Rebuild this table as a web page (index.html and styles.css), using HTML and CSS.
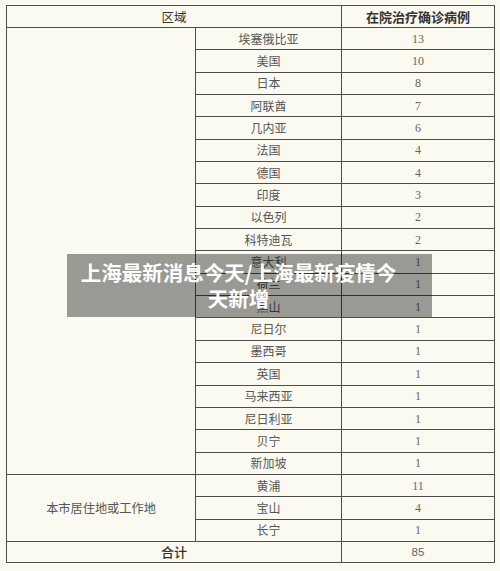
FILE: index.html
```html
<!DOCTYPE html>
<html lang="zh">
<head>
<meta charset="utf-8">
<link rel="stylesheet" href="styles.css">
</head>
<body>
<div class="page">
  <table class="cases">
    <colgroup>
      <col class="c1"><col class="c2"><col class="c3">
    </colgroup>
    <thead>
      <tr class="head">
        <th colspan="2" class="h-region">区域</th>
        <th class="h-count">在院治疗确诊病例</th>
      </tr>
    </thead>
    <tbody>
      <tr><td rowspan="20" class="group"></td><td class="name">埃塞俄比亚</td><td class="num">13</td></tr>
      <tr><td class="name">美国</td><td class="num">10</td></tr>
      <tr><td class="name">日本</td><td class="num">8</td></tr>
      <tr><td class="name">阿联酋</td><td class="num">7</td></tr>
      <tr><td class="name">几内亚</td><td class="num">6</td></tr>
      <tr><td class="name">法国</td><td class="num">4</td></tr>
      <tr><td class="name">德国</td><td class="num">4</td></tr>
      <tr><td class="name">印度</td><td class="num">3</td></tr>
      <tr><td class="name">以色列</td><td class="num">2</td></tr>
      <tr><td class="name">科特迪瓦</td><td class="num">2</td></tr>
      <tr><td class="name">意大利</td><td class="num">1</td></tr>
      <tr><td class="name">荷兰</td><td class="num">1</td></tr>
      <tr><td class="name">黑山</td><td class="num">1</td></tr>
      <tr><td class="name">尼日尔</td><td class="num">1</td></tr>
      <tr><td class="name">墨西哥</td><td class="num">1</td></tr>
      <tr><td class="name">英国</td><td class="num">1</td></tr>
      <tr><td class="name">马来西亚</td><td class="num">1</td></tr>
      <tr><td class="name">尼日利亚</td><td class="num">1</td></tr>
      <tr><td class="name">贝宁</td><td class="num">1</td></tr>
      <tr><td class="name">新加坡</td><td class="num">1</td></tr>
      <tr><td rowspan="3" class="group">本市居住地或工作地</td><td class="name">黄浦</td><td class="num">11</td></tr>
      <tr><td class="name">宝山</td><td class="num">4</td></tr>
      <tr><td class="name">长宁</td><td class="num">1</td></tr>
      <tr class="total"><td colspan="2" class="t-label">合计</td><td class="num">85</td></tr>
    </tbody>
  </table>
  <div class="banner">上海最新消息今天/上海最新疫情今<br>天新增</div>
</div>
</body>
</html>
```
FILE: styles.css
```css
html, body {
  margin: 0;
  padding: 0;
  background: #fbfaf0;
}
body {
  font-family: "Noto Sans CJK SC", "Noto Sans", sans-serif;
  color: #555;
}
.page {
  position: relative;
  width: 500px;
  height: 571px;
  padding: 5px 0 0 6px;
  box-sizing: border-box;
}
.cases {
  border-collapse: collapse;
  table-layout: fixed;
  width: 488px;
}
.c1 { width: 189px; }
.c2 { width: 146px; }
.c3 { width: 153px; }
.cases th, .cases td {
  border: 1px solid #4d4d4d;
  padding: 0;
  text-align: center;
  vertical-align: middle;
  line-height: 14px;
}
.head { height: 22px; }
.h-region {
  font-size: 12.5px;
  font-weight: 400;
  color: #333;
}
.h-count {
  font-size: 13px;
  font-weight: 700;
  color: #333;
}
tbody tr { height: 22.35px; }
.name {
  font-size: 12px;
  color: #555;
}
.group {
  font-size: 12.2px;
  color: #555;
}
.num {
  font-family: "Liberation Serif", "DejaVu Serif", serif;
  font-size: 12px;
  color: #666;
}
.cases tr.total { height: 21px; }
.t-label {
  font-size: 13px;
  font-weight: 500;
  color: #333;
}
.total .num {
  font-family: "Liberation Sans", sans-serif;
  font-size: 11.5px;
}
.banner {
  position: absolute;
  left: 67px;
  top: 254px;
  width: 365px;
  height: 63px;
  box-sizing: border-box;
  padding: 5px 22px 0 0;
  background: rgba(0, 0, 0, 0.385);
  color: #fff;
  font-family: "Noto Sans CJK SC", sans-serif;
  font-weight: 700;
  font-size: 20.5px;
  line-height: 26px;
  text-align: center;
}
```
